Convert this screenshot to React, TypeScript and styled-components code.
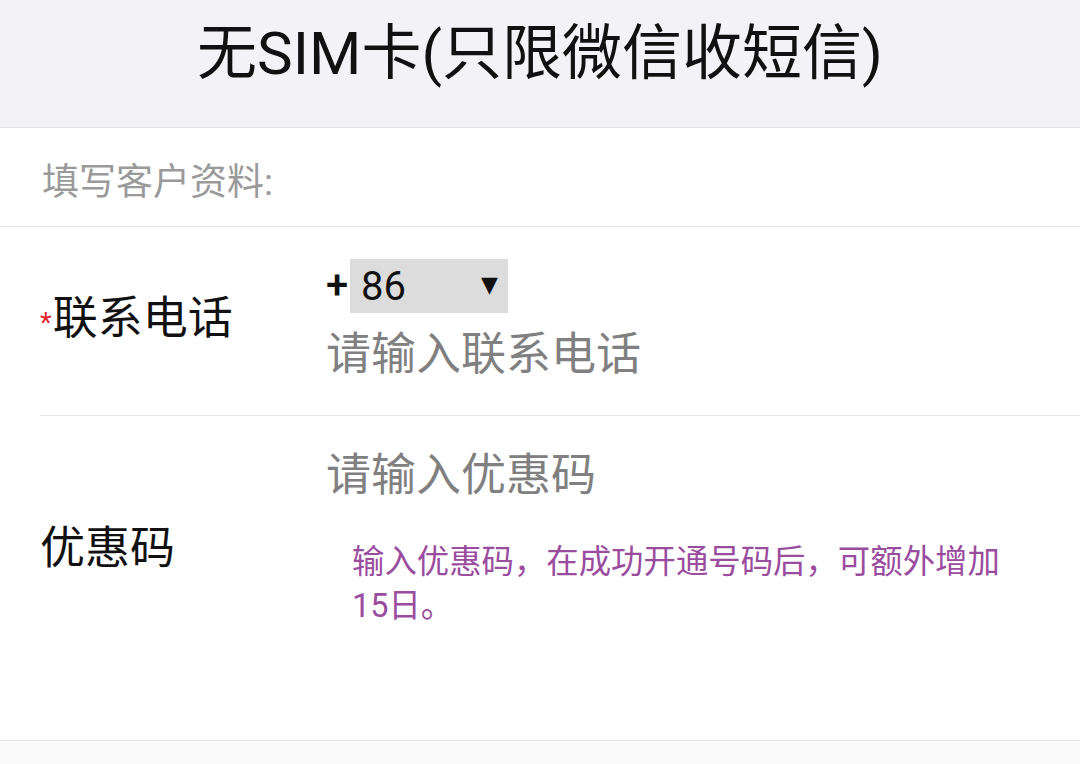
import { createGlobalStyle, styled } from "styled-components";

const GlobalStyle = createGlobalStyle`
  html, body {
    margin: 0;
    padding: 0;
    background: #fafafa;
  }
  body {
    font-family: Roboto, "Noto Sans CJK SC", sans-serif;
    color: #111;
  }
`;

const Page = styled.div`
  width: 1080px;
  background: #ffffff;
`;

const Header = styled.header`
  height: 127px;
  background: #f3f3f7;
  border-bottom: 1px solid #e4e4e6;
  display: flex;
  align-items: center;
  justify-content: center;
`;

const Title = styled.h1`
  margin: 0;
  font-size: 60px;
  font-weight: 400;
  line-height: 1;
  color: #111;
  transform: translateY(-10px);
`;

const Section = styled.div`
  padding: 30px 42px 18px;
  border-bottom: 1px solid #e6e6e6;
`;

const SectionTitle = styled.div`
  font-size: 37px;
  line-height: 50px;
  color: #9a9a9a;
`;

const Row = styled.div<{ $height: number; $align: string; $inset?: boolean }>`
  display: flex;
  align-items: ${(p) => p.$align};
  height: ${(p) => p.$height}px;
  box-sizing: border-box;
  margin-left: ${(p) => (p.$inset ? 40 : 0)}px;
  padding-left: ${(p) => (p.$inset ? 0 : 40)}px;
  border-bottom: 1px solid #e6e6e6;
`;

const Label = styled.div<{ $top?: number }>`
  width: 286px;
  flex-shrink: 0;
  font-size: 45px;
  line-height: 60px;
  color: #111;
  padding-top: ${(p) => p.$top ?? 0}px;
  white-space: nowrap;
`;

const Required = styled.span`
  color: #e0232b;
  font-size: 27px;
  vertical-align: middle;
  margin-right: 1px;
`;

const Field = styled.div<{ $top?: number }>`
  display: flex;
  flex-direction: column;
  padding-top: ${(p) => p.$top ?? 0}px;
`;

const CodeLine = styled.div`
  display: flex;
  align-items: center;
  height: 54px;
`;

const Plus = styled.span`
  font-size: 40px;
  font-weight: 500;
  line-height: 1;
  width: 24px;
`;

const CodeSelect = styled.div`
  width: 158px;
  height: 54px;
  background: #dcdcdc;
  display: flex;
  align-items: center;
  justify-content: space-between;
  box-sizing: border-box;
  padding: 0 10px 0 11px;
  font-size: 40px;
  color: #111;
`;

const Caret = styled.span`
  font-size: 22px;
  font-family: "DejaVu Sans", sans-serif;
  margin-bottom: 4px;
`;

const Placeholder = styled.div<{ $gap?: number }>`
  font-size: 45px;
  line-height: 60px;
  color: #808080;
  margin-top: ${(p) => p.$gap ?? 0}px;
`;

const Note = styled.div`
  margin: 34px 0 0 26px;
  width: 672px;
  font-size: 32.4px;
  line-height: 44px;
  color: #9a4c9e;
`;

export default function App() {
  return (
    <>
      <GlobalStyle />
      <Page>
        <Header>
          <Title>无SIM卡(只限微信收短信)</Title>
        </Header>
        <Section>
          <SectionTitle>填写客户资料:</SectionTitle>
        </Section>
        <Row $height={189} $align="center" $inset>
          <Label>
            <Required>*</Required>联系电话
          </Label>
          <Field $top={2}>
            <CodeLine>
              <Plus>+</Plus>
              <CodeSelect>
                <span>86</span>
                <Caret>▼</Caret>
              </CodeSelect>
            </CodeLine>
            <Placeholder $gap={12}>请输入联系电话</Placeholder>
          </Field>
        </Row>
        <Row $height={325} $align="flex-start">
          <Label $top={103}>优惠码</Label>
          <Field $top={30}>
            <Placeholder>请输入优惠码</Placeholder>
            <Note>输入优惠码，在成功开通号码后，可额外增加15日。</Note>
          </Field>
        </Row>
      </Page>
    </>
  );
}
